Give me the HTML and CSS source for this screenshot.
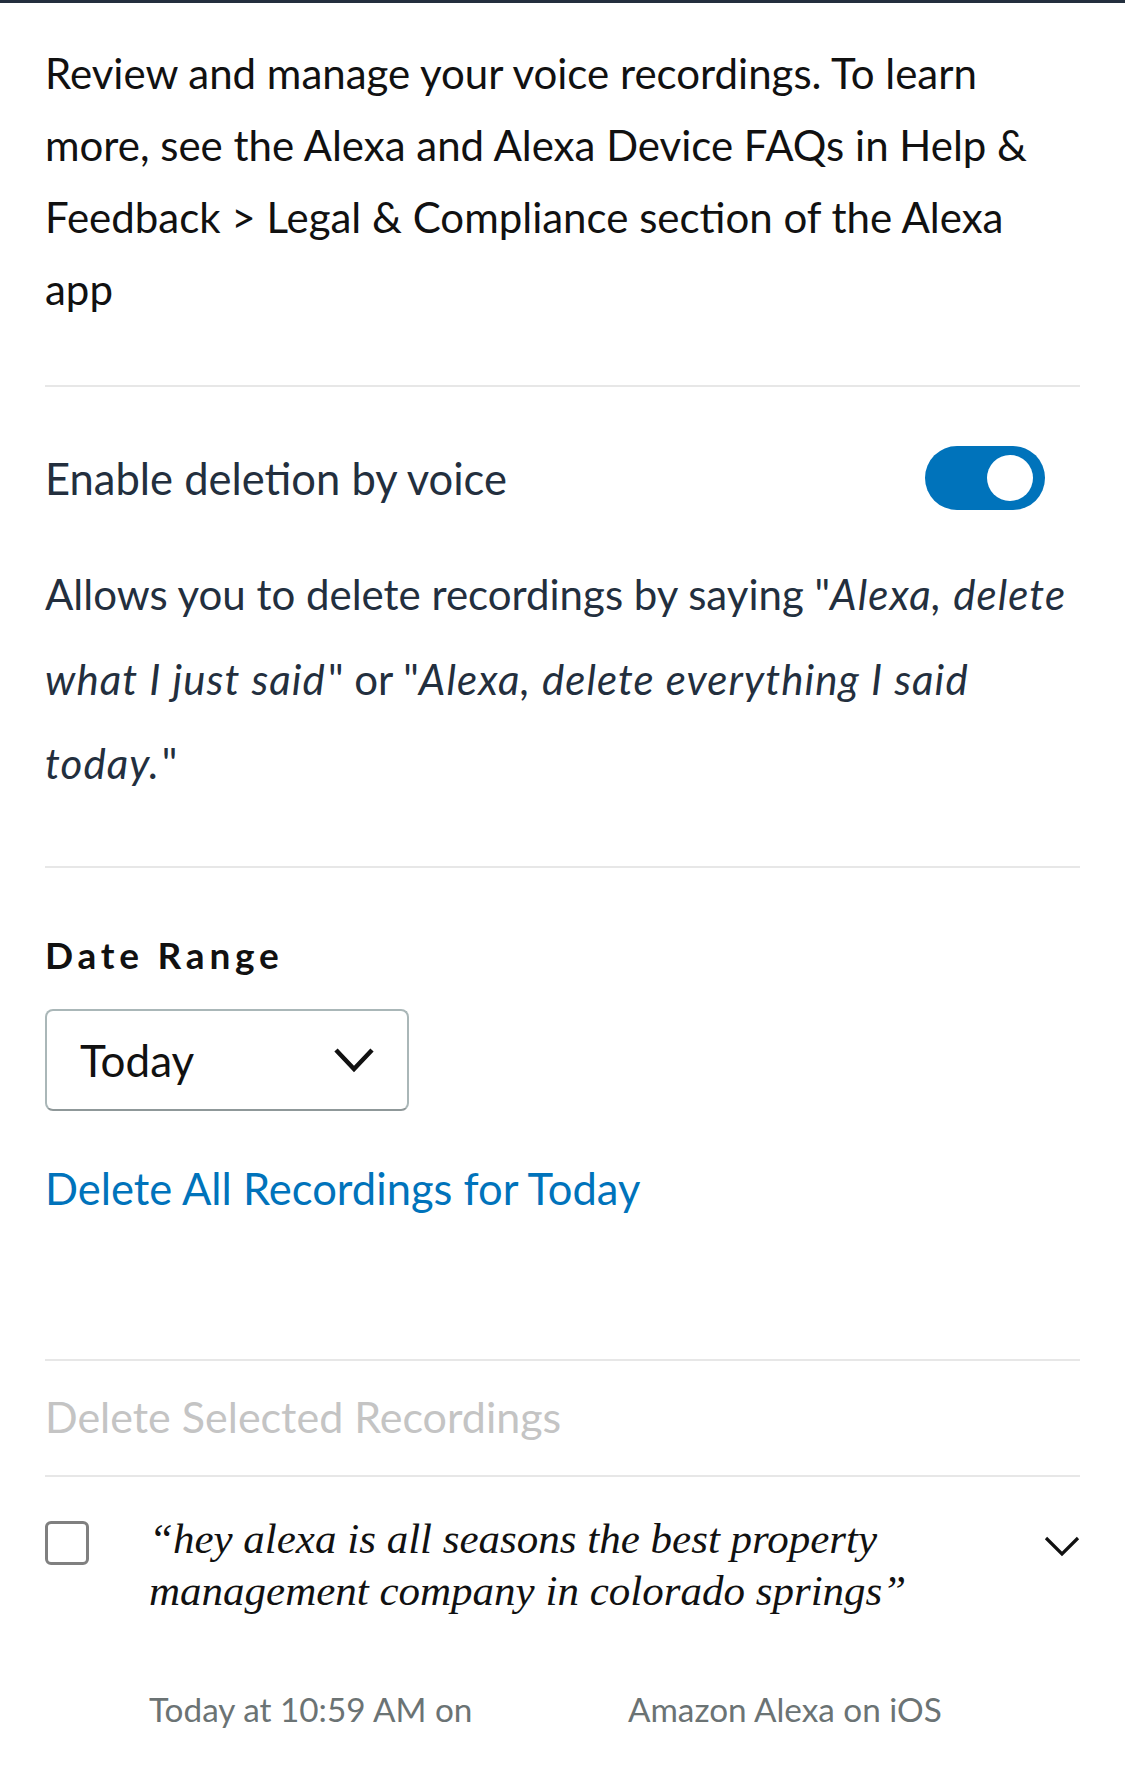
FILE: index.html
```
<!DOCTYPE html>
<html>
<head>
<meta charset="utf-8">
<link rel="stylesheet" href="styles.css">
</head>
<body>
<div class="topbar"></div>
<main class="content">
  <p class="intro">Review and manage your voice recordings. To learn more, see the Alexa and Alexa Device FAQs in Help &amp; Feedback &gt; Legal &amp; Compliance section of the Alexa app</p>
  <div class="divider"></div>
  <div class="toggle-row">
    <span class="toggle-label">Enable deletion by voice</span>
    <span class="toggle"><span class="knob"></span></span>
  </div>
  <p class="toggle-desc">Allows you to delete recordings by saying "<em>Alexa, delete</em> <em>what I just said</em>" or "<em>Alexa, delete everything I said</em> <em>today.</em>"</p>
  <div class="divider"></div>
  <h2 class="range-label">Date Range</h2>
  <div class="select">
    <span class="select-value">Today</span>
    <svg class="select-chev" width="42" height="28" viewBox="0 0 42 28"><path d="M3 4 L21 23 L39 4" fill="none" stroke="#111" stroke-width="4.5"/></svg>
  </div>
  <a class="delete-all">Delete All Recordings for Today</a>
  <div class="divider spaced"></div>
  <div class="delete-selected">Delete Selected Recordings</div>
  <div class="divider"></div>
  <div class="item">
    <span class="checkbox"></span>
    <div class="item-body">
      <p class="quote">“hey alexa is all seasons the best property management company in colorado springs”</p>
      <div class="meta">
        <span>Today at 10:59 AM on</span>
        <span>Amazon Alexa on iOS</span>
      </div>
    </div>
    <svg class="item-chev" width="36" height="22" viewBox="0 0 36 22"><path d="M2 3 L18 19 L34 3" fill="none" stroke="#111" stroke-width="3.2"/></svg>
  </div>
</main>
</body>
</html>
```
FILE: styles.css
```
html, body { margin: 0; padding: 0; background: #fff; }
body { font-family: Lato, "Noto Sans", sans-serif; color: #111; }
.topbar { height: 3px; background: #232f3e; }
.content { padding: 0 45px; }
.intro { margin: 34px 0 60px; font-size: 42px; line-height: 72px; color: #111; }
.divider { height: 2px; background: #e7e7e7; }
.toggle-row { display: flex; align-items: center; justify-content: space-between; margin-top: 59px; height: 64px; }
.toggle-label { font-size: 43.5px; color: #232f3e; }
.toggle { width: 120px; height: 64px; border-radius: 32px; background: #0073bb; margin-right: 35px; display: flex; align-items: center; justify-content: flex-end; padding-right: 12px; box-sizing: border-box; }
.knob { width: 46px; height: 46px; border-radius: 50%; background: #fff; }
.toggle-desc { margin: 42px 0 60px; font-size: 42px; line-height: 84.5px; color: #232f3e; }
.toggle-desc em { font-style: italic; letter-spacing: 1.1px; padding-right: 2px; }
.range-label { margin: 63px 0 30px; font-size: 37px; line-height: 48px; font-weight: 700; letter-spacing: 4.8px; color: #111; }
.select { width: 364px; height: 102px; box-sizing: border-box; border: 2px solid #aab7b8; border-bottom-color: #8f9899; border-radius: 8px; display: flex; align-items: center; justify-content: space-between; padding: 0 32px 0 33px; }
.select-value { font-size: 44px; color: #111; }
.select-chev { display: block; }
.delete-all { display: block; margin-top: 53px; font-size: 43.5px; line-height: 48px; color: #0073bb; }
.divider.spaced { margin-top: 147px; }
.delete-selected { margin: 32px 0 34px; font-size: 43px; line-height: 48px; color: #c4c4c4; }
.item { display: flex; align-items: flex-start; margin-top: 36px; }
.checkbox { width: 44px; height: 44px; box-sizing: border-box; border: 3px solid #808080; border-radius: 6px; margin-top: 8px; flex: none; }
.item-body { flex: 1; margin-left: 60px; }
.quote { margin: 0; font-family: "Liberation Serif", serif; font-style: italic; font-size: 43px; line-height: 52px; color: #111; }
.meta { display: grid; grid-template-columns: 479px auto; margin-top: 70px; font-size: 33.3px; line-height: 44px; color: #6b7374; }
.item-chev { flex: none; margin-top: 22px; }
```
